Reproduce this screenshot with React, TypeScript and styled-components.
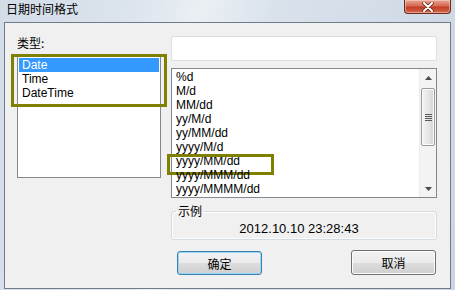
import React, { FC } from 'react';
import styled, { createGlobalStyle } from 'styled-components';

const GlobalStyle = createGlobalStyle`
  html, body {
    margin: 0;
    padding: 0;
    background: #ffffff;
  }
  body {
    font-family: "Liberation Sans", "Noto Sans CJK SC", sans-serif;
    font-size: 12px;
    color: #000;
  }
  * {
    box-sizing: border-box;
  }
`;

const Window = styled.div`
  width: 455px;
  height: 290px;
  display: flex;
  flex-direction: column;
  background: linear-gradient(
    100deg,
    #d3dde8 0%,
    #dbe3ec 25%,
    #eaeff4 40%,
    #d9e2eb 55%,
    #d2dce7 80%,
    #cbd6e2 100%
  );
  overflow: hidden;
`;

const TitleBar = styled.div`
  height: 22px;
  display: flex;
  justify-content: space-between;
  align-items: flex-start;
`;

const Title = styled.div`
  padding: 2px 0 0 6px;
  font-family: "Noto Sans CJK SC", sans-serif;
  font-size: 12px;
  line-height: 14px;
  color: #000;
`;

const CloseButton = styled.div`
  width: 47px;
  height: 14px;
  margin-right: 4px;
  border: 1px solid #6b2a1e;
  border-top: none;
  border-radius: 0 0 4px 4px;
  background: linear-gradient(#e9a697 0%, #d76a52 45%, #c03f25 55%, #d4684e 100%);
  box-shadow: inset 0 0 0 1px rgba(255, 220, 210, 0.5);
  display: flex;
  align-items: center;
  justify-content: center;
`;

const Client = styled.div`
  flex: 1;
  margin: 0 4px 1px 4px;
  border: 1px solid #707c89;
  background: #f0f0f0;
  display: grid;
  grid-template-columns: 144px 266px;
  column-gap: 10px;
  padding: 13px 0 0 12px;
  align-content: start;
`;

const Column = styled.div`
  display: flex;
  flex-direction: column;
`;

const Label = styled.div`
  height: 14px;
  line-height: 14px;
  font-family: "Noto Sans CJK SC", sans-serif;
  font-size: 12px;
  margin-bottom: 6px;
`;

const ListBox = styled.div<{ $height: number }>`
  position: relative;
  height: ${(p) => p.$height}px;
  border: 1px solid #828790;
  background: #fff;
`;

const Items = styled.div`
  padding: 1px;
`;

const Item = styled.div<{ $selected?: boolean; $marked?: boolean }>`
  position: relative;
  height: 14px;
  line-height: 14px;
  padding-left: 3px;
  white-space: nowrap;
  font-size: 12px;
  color: ${(p) => (p.$selected ? '#fff' : '#000')};
  background: ${(p) => (p.$selected ? '#3399ff' : 'transparent')};

  ${(p) =>
    p.$marked &&
    `
    &::after {
      content: '';
      position: absolute;
      left: -6px;
      top: 0;
      width: 101px;
      height: 15px;
      border: 3px solid #808000;
    }
  `}
`;

const Annotation = styled.div`
  position: absolute;
  left: -7px;
  top: -3px;
  width: 156px;
  height: 53px;
  border: 3px solid #808000;
  pointer-events: none;
`;

const TextInput = styled.div`
  height: 25px;
  border: 1px solid #dadde2;
  border-radius: 2px;
  background: #fff;
  margin-bottom: 7px;
`;

const FormatList = styled(ListBox)`
  display: grid;
  grid-template-columns: 1fr 17px;
`;

const ScrollBar = styled.div`
  display: flex;
  flex-direction: column;
  background: #f3f3f3;
  border-left: 1px solid #ececec;
`;

const Arrow = styled.div`
  height: 17px;
  display: flex;
  align-items: center;
  justify-content: center;
`;

const Track = styled.div`
  flex: 1;
  padding: 2px 1px 0 1px;
`;

const Thumb = styled.div`
  height: 58px;
  border: 1px solid #9b9b9b;
  border-radius: 2px;
  background: linear-gradient(90deg, #f3f3f3 0%, #e6e6e6 50%, #d4d4d4 100%);
  box-shadow: inset 0 0 0 1px #fafafa;
  display: flex;
  flex-direction: column;
  align-items: center;
  justify-content: center;
  gap: 1px;
`;

const Grip = styled.div`
  width: 7px;
  height: 1px;
  background: #5a5a5a;
`;

const Group = styled.fieldset`
  margin: 5px 0 0 0;
  padding: 0 10px 0 0;
  height: 37px;
  border: 1px solid #d3dbe2;
  border-radius: 3px;
  box-shadow: inset 0 0 0 1px #fdfdfd;
  min-width: 0;
`;

const Legend = styled.legend`
  margin-left: 4px;
  padding: 0 2px;
  line-height: 16px;
  font-family: "Noto Sans CJK SC", sans-serif;
  font-size: 12px;
`;

const Sample = styled.div`
  height: 20px;
  line-height: 20px;
  text-align: center;
  font-size: 13px;
  color: #000;
`;

const Buttons = styled.div`
  display: flex;
  justify-content: space-between;
  align-items: flex-start;
  margin-top: 10px;
  padding: 0 1px 0 6px;
`;

const Button = styled.button<{ $default?: boolean }>`
  width: 85px;
  height: ${(p) => (p.$default ? 24 : 25)}px;
  margin-top: ${(p) => (p.$default ? 1 : 0)}px;
  padding: 0;
  font-family: "Noto Sans CJK SC", sans-serif;
  font-size: 12px;
  color: #000;
  border: 1px solid ${(p) => (p.$default ? '#3c7fb1' : '#707070')};
  border-radius: 3px;
  background: linear-gradient(#f2f2f2 0%, #ebebeb 50%, #dddddd 51%, #cfcfcf 100%);
  box-shadow: inset 0 0 0 1px ${(p) => (p.$default ? '#97d6f5' : '#fbfbfb')};
`;

const typeItems = ['Date', 'Time', 'DateTime'];
const formatItems = [
  '%d',
  'M/d',
  'MM/dd',
  'yy/M/d',
  'yy/MM/dd',
  'yyyy/M/d',
  'yyyy/MM/dd',
  'yyyy/MMM/dd',
  'yyyy/MMMM/dd',
];

const Triangle: FC<{ dir: 'up' | 'down' }> = ({ dir }) => (
  <svg width="7" height="4" viewBox="0 0 7 4">
    <polygon
      points={dir === 'up' ? '3.5,0 7,4 0,4' : '0,0 7,0 3.5,4'}
      fill="#4a4a4a"
    />
  </svg>
);

const App: FC = () => (
  <>
    <GlobalStyle />
    <Window>
      <TitleBar>
        <Title>日期时间格式</Title>
        <CloseButton>
          <svg width="12" height="10" viewBox="0 0 12 10">
            <path
              d="M2 1 L10 9 M10 1 L2 9"
              stroke="#5a2014"
              strokeWidth="3.4"
              strokeLinecap="round"
            />
            <path
              d="M2 1 L10 9 M10 1 L2 9"
              stroke="#ffffff"
              strokeWidth="2"
              strokeLinecap="round"
            />
          </svg>
        </CloseButton>
      </TitleBar>
      <Client>
        <Column>
          <Label>类型:</Label>
          <ListBox $height={122}>
            <Items>
              {typeItems.map((t, i) => (
                <Item key={t} $selected={i === 0}>
                  {t}
                </Item>
              ))}
            </Items>
            <Annotation />
          </ListBox>
        </Column>
        <Column>
          <TextInput />
          <FormatList $height={130}>
            <Items>
              {formatItems.map((f) => (
                <Item key={f} $marked={f === 'yyyy/MM/dd'}>
                  {f}
                </Item>
              ))}
            </Items>
            <ScrollBar>
              <Arrow>
                <Triangle dir="up" />
              </Arrow>
              <Track>
                <Thumb>
                  <Grip />
                  <Grip />
                  <Grip />
                  <Grip />
                </Thumb>
              </Track>
              <Arrow>
                <Triangle dir="down" />
              </Arrow>
            </ScrollBar>
          </FormatList>
          <Group>
            <Legend>示例</Legend>
            <Sample>2012.10.10 23:28:43</Sample>
          </Group>
          <Buttons>
            <Button $default>确定</Button>
            <Button>取消</Button>
          </Buttons>
        </Column>
      </Client>
    </Window>
  </>
);

export default App;
